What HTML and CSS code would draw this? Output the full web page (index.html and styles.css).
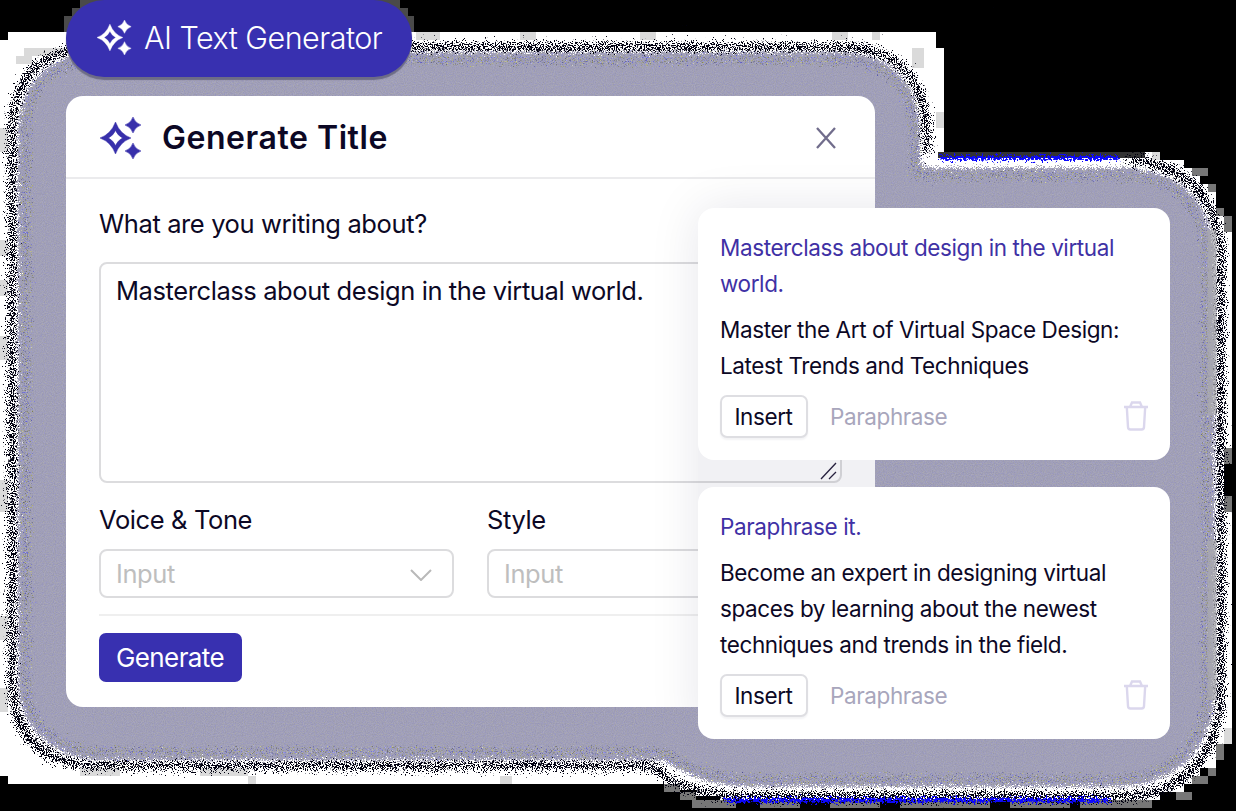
FILE: index.html
```html
<!DOCTYPE html>
<html lang="en">
<head>
<meta charset="utf-8">
<title>AI Text Generator</title>
<link rel="stylesheet" href="styles.css">
</head>
<body>
<main class="stage">
  <svg class="backdrop" viewBox="0 0 1236 811" aria-hidden="true">
    <defs>
      <filter id="spark-dark" x="0" y="0" width="1236" height="811" filterUnits="userSpaceOnUse" color-interpolation-filters="sRGB">
        <feGaussianBlur in="SourceAlpha" stdDeviation="6" result="b"/>
        <feTurbulence type="fractalNoise" baseFrequency="0.9" numOctaves="2" seed="3"/>
        <feColorMatrix values="0 0 0 0 0  0 0 0 0 0  0 0 0 0 0  1 0 0 0 0" result="n"/>
        <feComposite in="b" in2="n" operator="arithmetic" k2="0.85" k3="1.5" k4="-0.84"/>
        <feColorMatrix values="0 0 0 0 0  0 0 0 0 0  0 0 0 0 0.06  0 0 0 14 -6.5"/>
      </filter>
      <filter id="spark-blue" x="0" y="0" width="1236" height="811" filterUnits="userSpaceOnUse" color-interpolation-filters="sRGB">
        <feGaussianBlur in="SourceAlpha" stdDeviation="2" result="b"/>
        <feTurbulence type="fractalNoise" baseFrequency="0.5" numOctaves="2" seed="21"/>
        <feColorMatrix values="0 0 0 0 0  0 0 0 0 0  0 0 0 0 0  0 1 0 0 0" result="n"/>
        <feComposite in="b" in2="n" operator="arithmetic" k2="0.8" k3="1.6" k4="-1"/>
        <feColorMatrix values="0 0 0 0 0.05  0 0 0 0 0.03  0 0 0 0 1  0 0 0 14 -6.5"/>
      </filter>
      <filter id="spark-light" x="0" y="0" width="1236" height="811" filterUnits="userSpaceOnUse" color-interpolation-filters="sRGB">
        <feGaussianBlur in="SourceAlpha" stdDeviation="5" result="b"/>
        <feTurbulence type="fractalNoise" baseFrequency="0.8" numOctaves="2" seed="9"/>
        <feColorMatrix values="0 0 0 0 0  0 0 0 0 0  0 0 0 0 0  0 0 1 0 0" result="n"/>
        <feComposite in="b" in2="n" operator="arithmetic" k2="0.8" k3="1.6" k4="-0.98"/>
        <feColorMatrix values="0 0 0 0 1  0 0 0 0 1  0 0 0 0 1  0 0 0 14 -6.5"/>
      </filter>
      <filter id="halo" x="0" y="0" width="1236" height="811" filterUnits="userSpaceOnUse" color-interpolation-filters="sRGB">
        <feGaussianBlur in="SourceAlpha" stdDeviation="6" result="b"/>
        <feTurbulence type="fractalNoise" baseFrequency="0.9" numOctaves="2" seed="5" result="t"/>
        <feColorMatrix in="t" values="0 0 0 0 0  0 0 0 0 0  0 0 0 0 0  1 0 0 0 0" result="n"/>
        <feComposite in="b" in2="n" operator="arithmetic" k2="1.5" k3="1.6" k4="-1.05"/>
        <feColorMatrix values="0 0 0 0 0  0 0 0 0 0  0 0 0 0 0  0 0 0 14 -6.5" result="mask"/>
        <feColorMatrix in="t" values="0.12 0 0 0 0.57  0.12 0 0 0 0.565  0 0.14 0 0 0.65  0 0 0 0 1"/>
        <feComposite in2="mask" operator="in"/>
      </filter>
      <filter id="grain" x="0" y="0" width="1236" height="811" filterUnits="userSpaceOnUse" color-interpolation-filters="sRGB">
        <feGaussianBlur in="SourceAlpha" stdDeviation="6" result="b"/>
        <feTurbulence type="fractalNoise" baseFrequency="0.8" numOctaves="2" seed="14" result="t"/>
        <feColorMatrix in="t" values="0 0 0 0 0  0 0 0 0 0  0 0 0 0 0  0 1 0 0 0" result="n"/>
        <feComposite in="b" in2="n" operator="arithmetic" k2="0.85" k3="1.4" k4="-0.84"/>
        <feColorMatrix values="0 0 0 0 0  0 0 0 0 0  0 0 0 0 0  0 0 0 10 -4.5" result="mask"/>
        <feColorMatrix in="t" values="0.7 0 0 0 0.22  0.7 0 0 0 0.22  0 0 1 0 0.16  0 0 0 0 1"/>
        <feComposite in2="mask" operator="in"/>
      </filter>
    </defs>
    <path fill="#fff" d="M8 32H936V48H944V152H1160V160H1184V168H1200V184H1208V192H1216V216H1224V224H1232V448H1224V498H1232V728H1224V752H1216V768H1200V784H1184V792H1160V800H720V796H696V790H680V784H8V776H0V40H8Z"/>
    <path fill="#4a4a4a" d="M80 0H400V8H408V16H414V32H64V16H72V8H80Z"/>
    <path fill="#777" d="M1192 168h16v8h-16zM1208 184h8v8h-8zM1216 208h8v8h-8zM1224 216h8v16h-8zM1224 448h8v16h-8zM1224 496h8v16h-8zM664 784h16v8h-16zM680 792h16v8h-16zM1216 744h8v16h-8zM1208 768h8v8h-8zM1192 776h16v8h-16zM1176 792h16v8h-16zM692 800h44v8h-44zM760 800h40v8h-40zM830 800h50v8h-50zM900 800h90v8h-90zM1010 800h60v8h-60zM1080 800h72v8h-72z"/>
    <path fill="#dadada" d="M0 128h8v24H0zM16 56h16v8H16zM0 240h8v16H0zM0 280h8v16H0zM0 336h8v24H0zM0 480h8v32H0zM0 616h8v24H0zM0 688h8v24H0zM24 48h40v8H24zM80 768h40v8H80zM200 768h48v8h-48zM248 776h8v8h-8zM416 32h24v8h-24zM520 32h16v8h-16zM640 32h16v8h-16zM832 32h16v8h-16zM872 32h8v8h-8zM912 48h12v20h-12zM936 112h8v16h-8zM1152 152h8v8h-8zM500 776h12v8h-12zM1224 728h8v16h-8z"/>
    <path class="line" stroke="#333" stroke-width="6" d="M938 155H1145"/>
    <g class="line">
      <path filter="url(#spark-dark)" stroke="#000" stroke-width="13" d="M90 48H850Q920 52 926 128V158M1125 160Q1212 165 1220 250V700Q1212 788 1130 796H740Q675 794 655 765H90Q17 758 13 690V124Q18 52 90 48"/>
      <path filter="url(#spark-light)" stroke="#fff" stroke-width="9" d="M90 51H850Q918 55 922 128V165H1130Q1206 169 1216 250V700Q1206 784 1130 791H740Q675 788 655 761H90Q22 754 17 690V124Q23 56 90 51"/>
      <path stroke="#fff" stroke-width="9" d="M936 164H1120"/>
      <path filter="url(#spark-blue)" stroke="#00f" stroke-width="9" d="M938 158H1122M722 800H1112"/>
    </g>
    <path class="halo" filter="url(#halo)" d="M96 52H845Q915 57 920 128V168H1130Q1205 173 1215 250V700Q1205 779 1125 787H740Q690 781 665 760H90Q26 749 18 690V124Q25 57 96 52Z"/>
    <g class="line">
      <path filter="url(#grain)" stroke="#000" stroke-width="13" d="M96 60H845Q910 64 914 128V176H1130Q1198 180 1206 250V700Q1198 770 1125 779H740Q690 774 665 752H90Q34 742 26 690V124Q32 64 96 60"/>
      <path stroke="#aaaaae" stroke-opacity=".7" stroke-width="9" d="M1212 230V415M1212 540V700"/>
    </g>
  </svg>

  <header class="pill">
    <svg class="pill-icon" viewBox="0 0 42 42"><path class="star" d="M15.500 5Q20 17 31 21Q20 25 15.500 37Q11 25 0 21Q11 17 15.500 5ZM15.500 13.500Q13.300 18.500 8.500 21Q13.300 23.500 15.500 28.500Q17.700 23.500 22.500 21Q17.700 18.500 15.500 13.500Z"/><path class="star" d="M33 0Q35 6 41 8Q35 10 33 16Q31 10 25 8Q31 6 33 0ZM33 26Q35 32 41 34Q35 36 33 42Q31 36 25 34Q31 32 33 26Z"/></svg>
    <span>AI Text Generator</span>
  </header>

  <section class="panel">
    <div class="panel-head">
      <svg class="panel-icon" viewBox="0 0 42 42"><path class="star" d="M15.500 5Q20 17 31 21Q20 25 15.500 37Q11 25 0 21Q11 17 15.500 5ZM15.500 13.500Q13.300 18.500 8.500 21Q13.300 23.500 15.500 28.500Q17.700 23.500 22.500 21Q17.700 18.500 15.500 13.500Z"/><path class="star" d="M33 0Q35 6 41 8Q35 10 33 16Q31 10 25 8Q31 6 33 0ZM33 26Q35 32 41 34Q35 36 33 42Q31 36 25 34Q31 32 33 26Z"/></svg>
      <h1>Generate Title</h1>
      <svg class="close" viewBox="0 0 20 22"><path d="M1 1L19 21M19 1L1 21"/></svg>
    </div>
    <div class="panel-body">
      <label class="label">What are you writing about?</label>
      <div class="textarea"><span>Masterclass about design in the virtual world.</span>
        <svg class="grip" viewBox="0 0 18 18"><path d="M1 17L16 1M9 17L16 10"/></svg>
      </div>
      <div class="fields">
        <div class="field"><label class="label">Voice &amp; Tone</label>
          <div class="select"><span>Input</span><svg class="chevron" viewBox="0 0 22 12"><path d="M1 1L11 11L21 1"/></svg></div></div>
        <div class="field"><label class="label">Style</label>
          <div class="select"><span>Input</span></div></div>
      </div>
      <div class="panel-foot"><button class="generate">Generate</button></div>
    </div>
  </section>

  <aside class="results">
    <article class="card">
      <p class="prompt">Masterclass about design in the virtual<br>world.</p>
      <p class="answer">Master the Art of Virtual Space Design:<br>Latest Trends and Techniques</p>
      <div class="actions"><button class="insert">Insert</button><span class="paraphrase">Paraphrase</span>
        <svg class="trash" viewBox="0 0 24 30"><path d="M0 6H24M6 6L8 1.500H16L18 6M2.800 6L4 26Q4 28.500 6.500 28.500H17.500Q20 28.500 20 26L21.200 6"/></svg></div>
    </article>
    <article class="card">
      <p class="prompt">Paraphrase it.</p>
      <p class="answer">Become an expert in designing virtual<br>spaces by learning about the newest<br>techniques and trends in the field.</p>
      <div class="actions"><button class="insert">Insert</button><span class="paraphrase">Paraphrase</span>
        <svg class="trash" viewBox="0 0 24 30"><path d="M0 6H24M6 6L8 1.500H16L18 6M2.800 6L4 26Q4 28.500 6.500 28.500H17.500Q20 28.500 20 26L21.200 6"/></svg></div>
    </article>
  </aside>
</main>
</body>
</html>
```
FILE: styles.css
```css
* { box-sizing: border-box; }
body { margin: 0; background: #000; color: #0c0825; font-family: Inter, "Liberation Sans", sans-serif; }
svg { display: block; fill: none; flex: none; }
h1, p { margin: 0; }
button { font: inherit; letter-spacing: inherit; padding: 0; }
.stage { position: relative; width: 1236px; height: 811px; overflow: hidden; padding-left: 66px; }
.backdrop { position: absolute; inset: 0; width: 1236px; height: 811px; }
.line { fill: none; }
.halo { fill: #a09fba; }
.star { fill: currentColor; fill-rule: evenodd; stroke: currentColor; stroke-width: .5; stroke-linejoin: round; }

.pill { position: relative; width: 346px; height: 77px; display: flex; align-items: center; gap: 12px; padding: 0 0 2px 31px; border-radius: 38px; background: #3830b0; color: #fff; font-size: 30.5px; font-weight: 300; letter-spacing: -.52px; white-space: nowrap; box-shadow: 0 3px 1px #6d6c86; }
.pill-icon { width: 35px; height: 35px; }

.panel { position: relative; width: 809px; height: 611px; margin-top: 19px; border-radius: 17px; background: #fff; overflow: hidden; }
/* Soft shade cast on the panel by the result cards */
.panel::after { content: ""; position: absolute; left: 632px; top: 112px; width: 472px; height: 531px; border-radius: 16px; background: rgba(20, 14, 60, .06); box-shadow: 0 0 50px rgba(20, 14, 60, .1); }
.panel-head { height: 83px; display: flex; align-items: center; padding: 3px 39px 0 34px; border-bottom: 2px solid #ebebed; }
.panel-icon { width: 42px; height: 42px; color: #3830ab; }
.panel-head h1 { flex: 1; margin: -2px 0 0 20px; font-size: 32px; font-weight: 600; letter-spacing: .54px; }
.close { width: 20px; height: 22px; stroke: #716d8c; stroke-width: 2.3; }
.panel-body { padding: 29px 33px 0; }
.label { display: block; height: 32px; line-height: 32px; font-size: 25.5px; letter-spacing: -.38px; white-space: nowrap; }
.textarea { position: relative; height: 221px; margin-top: 22px; padding: 11px 15px; border: 2px solid #dcdcde; border-radius: 8px; font-size: 25.5px; line-height: 32px; letter-spacing: -.41px; white-space: nowrap; }
.grip { position: absolute; right: 2px; bottom: 1px; width: 18px; height: 18px; stroke: #29233f; stroke-width: 1.3; }
.fields { display: grid; grid-template-columns: 355px 355px; gap: 33px; margin-top: 21px; }
.select { height: 49px; margin-top: 13px; padding: 2px 20px 0 15px; display: flex; align-items: center; justify-content: space-between; border: 2px solid #dcdcde; border-radius: 8px; color: #bebebe; font-size: 25.5px; letter-spacing: -.4px; }
.select span { margin-top: -2px; }
.chevron { width: 22px; height: 12px; stroke: #b9b9b9; stroke-width: 2; }
.panel-foot { margin-top: 16px; padding-top: 17px; border-top: 2px solid #efefef; }
.generate { display: block; width: 143px; height: 49px; border: 0; border-radius: 7px; background: #3830b0; color: #fff; font-size: 26px; letter-spacing: -.6px; padding-right: 1px; }

.results { position: absolute; left: 698px; top: 208px; width: 472px; display: flex; flex-direction: column; gap: 27px; }
.card { height: 252px; padding: 22px 22px 0; border-radius: 16px; background: #fff; font-size: 22.5px; line-height: 36px; letter-spacing: -.4px; white-space: nowrap; }
.prompt { color: #3f31a5; margin-bottom: 10px; }
.actions { display: flex; align-items: center; margin-top: 11px; }
.insert { width: 88px; height: 43px; padding-right: 1px; border: 2px solid #dedee2; border-radius: 7px; background: #fff; color: #0c0825; box-shadow: 0 2px 2px #f3f3f5; }
.paraphrase { margin-left: 22px; flex: 1; color: #a8a6bc; }
.trash { width: 24px; height: 30px; margin-top: -2px; stroke: #dbd7ed; stroke-width: 2.4; }
```
